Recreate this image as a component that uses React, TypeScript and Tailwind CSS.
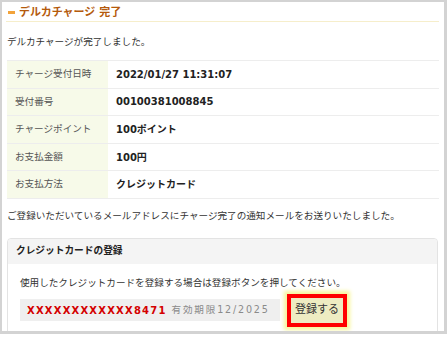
import React from "react";

const rows: { label: string; value: string }[] = [
  { label: "チャージ受付日時", value: "2022/01/27 11:31:07" },
  { label: "受付番号", value: "00100381008845" },
  { label: "チャージポイント", value: "100ポイント" },
  { label: "お支払金額", value: "100円" },
  { label: "お支払方法", value: "クレジットカード" },
];

export default function App() {
  return (
    <div className="w-[447px] h-[339px] bg-white font-['DejaVu_Sans','Noto_Sans_CJK_JP',sans-serif] text-[#333]">
      <div className="w-[447px] h-[334px] overflow-hidden border-[#d3d3d3] border-t-2 border-l-2 border-r-[3px] border-b-[3px]">
        <div className="pl-[4px] pr-[5px]">
          {/* title */}
          <div className="mt-[2px] h-[18px] flex items-center pl-[2px] border-b border-[#f6eecb]">
            <span className="w-[7px] h-[3px] bg-[#f2a33a] mr-[4px]" />
            <h1 className="text-[11px] font-bold leading-none text-[#b45a0c]">
              デルカチャージ 完了
            </h1>
          </div>

          <p className="mt-[13px] pl-[1px] text-[9.6px] leading-[14px]">
            デルカチャージが完了しました。
          </p>

          <div className="mt-[11px] ml-[1px] border-t border-[#ededed]">
            {rows.map((r) => (
              <div key={r.label} className="flex h-[27.6px] border-b border-[#ededed]">
                <div className="w-[101px] bg-[#f7fae9] pl-[8px] flex items-center text-[9.6px] text-[#555]">
                  {r.label}
                </div>
                <div className="flex-1 pl-[8px] flex items-center text-[10px] font-bold text-[#222]">
                  {r.value}
                </div>
              </div>
            ))}
          </div>

          <p className="mt-[10px] pl-[1px] text-[9.6px] leading-[14px]">
            ご登録いただいているメールアドレスにチャージ完了の通知メールをお送りいたしました。
          </p>

          {/* credit card */}
          <div className="mt-[15px] ml-[1px] mr-[1px] border border-[#e3e3e3] rounded-[4px] pb-[20px]">
            <div className="h-[25px] bg-[#f4f4f4] rounded-t-[4px] pl-[8px] flex items-center text-[9.7px] font-bold text-[#222]">
              クレジットカードの登録
            </div>
            <div className="pl-[12px]">
              <p className="mt-[12px] text-[9.6px] leading-[14px]">
                使用したクレジットカードを登録する場合は登録ボタンを押してください。
              </p>
              <div className="mt-[4px] flex items-center gap-[7px]">
                <div className="w-[260px] h-[22px] bg-[#efefef] pl-[7px] flex items-center">
                  <span className="text-[10px] font-bold text-[#d40000] tracking-[1.2px]">
                    XXXXXXXXXXXX8471
                  </span>
                  <span className="ml-[5px] text-[9.6px] text-[#8a8a8a] tracking-[1.8px]">
                    有効期限12/2025
                  </span>
                </div>
                <button className="w-[60px] h-[33px] border-[4px] border-[#ff0000] bg-[#eeecc2] shadow-[0_0_4px_3px_#f7f59a] text-[11px] text-[#333] flex items-center justify-center">
                  登録する
                </button>
              </div>
            </div>
          </div>
        </div>
      </div>
    </div>
  );
}
